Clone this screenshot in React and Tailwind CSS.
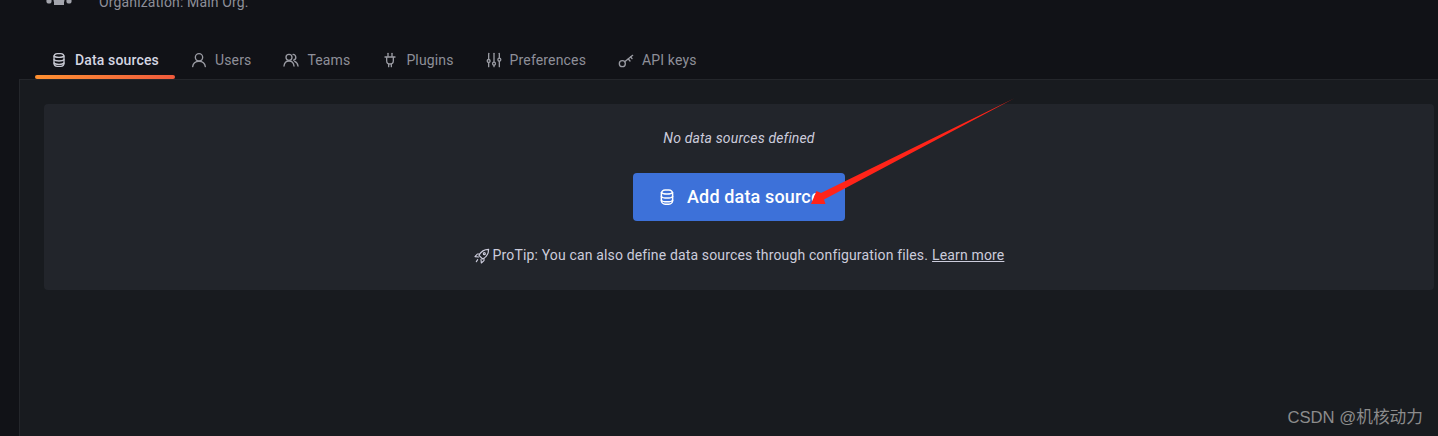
const iconProps = {
    viewBox: "0 0 24 24",
    fill: "none",
    stroke: "currentColor",
    strokeWidth: 2,
    strokeLinecap: "round",
    strokeLinejoin: "round",
};

const DatabaseIcon = ({ size = 16, className }) => (
    <svg {...iconProps} width={size} height={size} className={className}>
        <rect x="4.5" y="2.5" width="15" height="19" rx="5" />
        <path d="M4.5 6c2 2.6 13 2.6 15 0" />
        <path d="M4.5 11.5c2 2.6 13 2.6 15 0" />
        <path d="M4.5 16.5c2 2.6 13 2.6 15 0" />
    </svg>
);

const UserIcon = ({ size = 16, className }) => (
    <svg {...iconProps} width={size} height={size} className={className}>
        <circle cx="12" cy="8" r="5.5" />
        <path d="M2.5 22c.6-5 4.5-8 9.5-8s8.9 3 9.5 8" />
    </svg>
);

const TeamIcon = ({ size = 16, className }) => (
    <svg {...iconProps} width={size} height={size} className={className}>
        <circle cx="9" cy="8" r="4.5" />
        <path d="M1.5 21c.5-4.5 3.3-7.5 7.5-7.5s7 3 7.5 7.5" />
        <path d="M15 3.5a4.5 4.5 0 0 1 1 8.8" />
        <path d="M17.5 14c2.7 1 4.5 3.6 5 7" />
    </svg>
);

const PlugIcon = ({ size = 16, className }) => (
    <svg {...iconProps} width={size} height={size} className={className}>
        <path d="M9 2v5" />
        <path d="M15 2v5" />
        <path d="M4.5 7.5h15" />
        <path d="M7 8v5a5 5 0 0 0 10 0V8" />
        <path d="M10 18v4" />
        <path d="M14 18v4" />
    </svg>
);

const SlidersIcon = ({ size = 16, className }) => (
    <svg {...iconProps} width={size} height={size} className={className}>
        <path d="M4 2v9" />
        <path d="M4 16v6" />
        <circle cx="4" cy="13.5" r="2.2" />
        <path d="M12 2v13" />
        <path d="M12 20v2" />
        <circle cx="12" cy="17.5" r="2.2" />
        <path d="M20 2v7" />
        <path d="M20 14v8" />
        <circle cx="20" cy="11.5" r="2.2" />
    </svg>
);

const KeyIcon = ({ size = 16, className }) => (
    <svg {...iconProps} width={size} height={size} className={className}>
        <circle cx="6.5" cy="17.5" r="4.5" />
        <path d="M10 14.5 22 5" />
        <path d="m15.5 10.5 2.5 3" />
        <path d="m19 7.5 2 2.5" />
    </svg>
);

const RocketIcon = ({ size = 16, className }) => (
    <svg {...iconProps} strokeWidth={1.7} width={size} height={size} className={className}>
        <path d="M22 2c-6.5 0-11.5 3-14.5 9l5.5 5.5c6-3 9-8 9-14.5z" />
        <path d="M8.5 9H5l-3.500 4 5.500.5" />
        <path d="M15 15.5V19l-4 3.500-.5-5.500" />
        <path d="M5.500 17.500 3.500 20.500" />
        <circle cx="15.500" cy="8.500" r="1.500" />
    </svg>
);

const tabs = [
    { label: "Data sources", icon: DatabaseIcon, active: true },
    { label: "Users", icon: UserIcon },
    { label: "Teams", icon: TeamIcon },
    { label: "Plugins", icon: PlugIcon },
    { label: "Preferences", icon: SlidersIcon },
    { label: "API keys", icon: KeyIcon },
];

function Tab({ label, icon: Icon, active }) {
    return (
        <div className={`relative flex h-full items-center gap-2 px-4 pb-[1px] text-sm tracking-[0.15px] ${active ? "font-medium text-[#d5d6e2]" : "text-[#8e8f99]"}`}>
            <Icon className={active ? "text-[#c7c8d2]" : "text-[#9a9ba3]"} />
            <span>{label}</span>
            {active && (
                <div className="absolute bottom-0 left-0 right-0 h-1 rounded-sm bg-gradient-to-r from-[#ff9030] to-[#f05a3c]"></div>
            )}
        </div>
    );
}

export default function App() {
    return (
        <div className="relative h-[436px] w-[1438px] overflow-hidden bg-[#111217] font-['Roboto',sans-serif]">
            {/* encabezado cortado por arriba */}
            <div className="flex h-[79px] flex-col">
                <div className="flex h-[38px] -mt-[27px] shrink-0 items-start pl-[46px]">
                    <svg width="26" height="32" viewBox="0 0 26 32" className="text-[#a3a4ac]" fill="currentColor">
                        <circle cx="13" cy="27" r="5.5" />
                        <circle cx="3" cy="28" r="2.6" />
                        <circle cx="23" cy="28" r="2.6" />
                        <rect x="8" y="27" width="10" height="5" />
                    </svg>
                    <span className="ml-[27px] mt-[19px] text-sm tracking-[0.15px] text-[#8e8f99]">Organization: Main Org.</span>
                </div>
                <div className="mt-auto flex h-[38px] pl-[35px]">
                    {tabs.map((t) => (
                        <Tab key={t.label} {...t} />
                    ))}
                </div>
            </div>

            {/* contenido */}
            <div className="ml-[19px] h-[357px] border-l border-t border-[#24262b] bg-[#181b1f] pl-6 pt-6 pr-1">
                <div className="flex flex-col items-center rounded-sm bg-[#22252b] py-6 text-sm tracking-[0.15px] text-[#ccccdc]">
                    <p className="h-[21px] leading-[21px] italic">No data sources defined</p>
                    <button className="mt-6 flex h-12 w-[212px] items-center rounded-sm bg-[#3d71d9] pl-[25px] text-lg font-medium text-white">
                        <DatabaseIcon size={18} />
                        <span className="ml-[11px]">Add data source</span>
                    </button>
                    <p className="mt-6 flex h-[21px] items-center leading-[21px]">
                        <RocketIcon className="mr-[3px]" />
                        <span>ProTip: You can also define data sources through configuration files.</span>
                        <a className="ml-1 underline">Learn more</a>
                    </p>
                </div>
            </div>

            {/* flecha roja encima */}
            <svg className="absolute left-0 top-0" width="1438" height="436" viewBox="0 0 1438 436">
                <polygon points="1014,98.5 821,193 816.5,191 811,204 825.5,204 824,199.5" fill="#ff2419" />
            </svg>

            {/* marca de agua */}
            <div className="absolute bottom-[6px] right-[15px] font-['Liberation_Sans','Noto_Sans_CJK_SC',sans-serif] text-[16.7px] text-[#8c8c8c]">
                CSDN @机核动力
            </div>
        </div>
    );
}
